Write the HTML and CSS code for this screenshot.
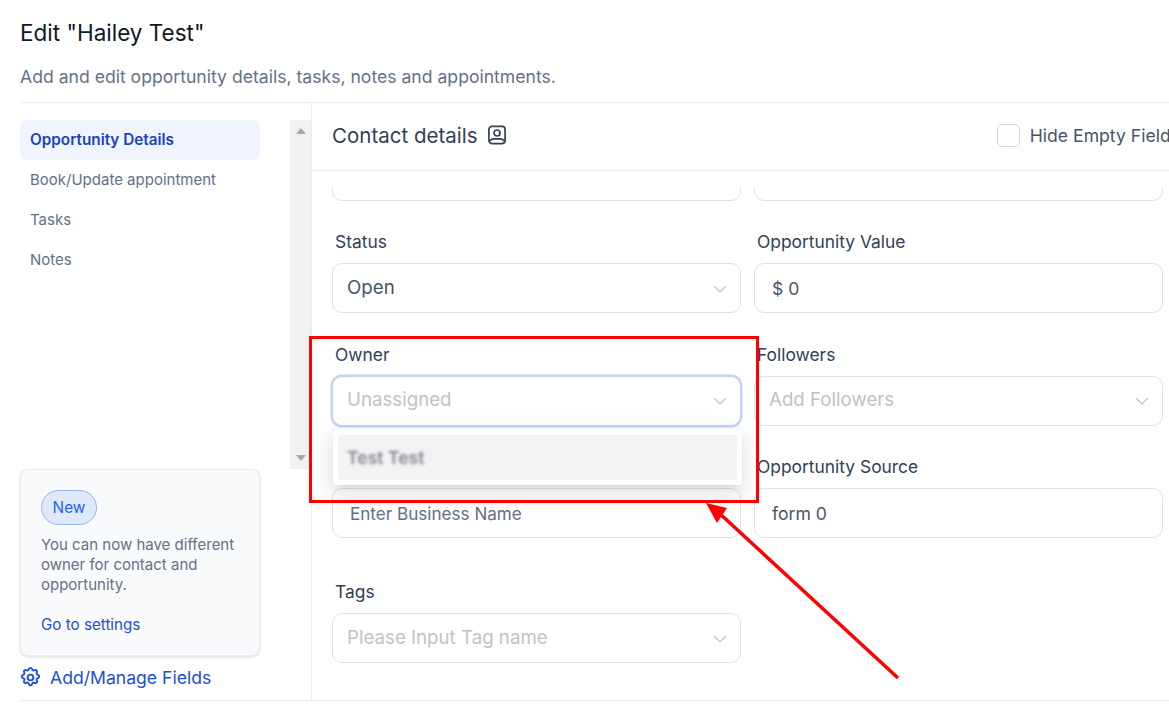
FILE: index.html
```html
<!DOCTYPE html>
<html lang="en">
<head>
    <meta charset="UTF-8">
    <meta name="viewport" content="width=device-width, initial-scale=1.0">
    <title>Edit Opportunity</title>
    <link rel="stylesheet" href="styles.css">
</head>
<body>
    <div class="page">
        <header class="page-head">
            <h1>Edit "Hailey Test"</h1>
            <p>Add and edit opportunity details, tasks, notes and appointments.</p>
        </header>

        <div class="page-body">
            <aside class="sidebar">
                <nav class="side-nav">
                    <a class="side-link active">Opportunity Details</a>
                    <a class="side-link">Book/Update appointment</a>
                    <a class="side-link">Tasks</a>
                    <a class="side-link">Notes</a>
                </nav>

                <div class="notice">
                    <span class="badge">New</span>
                    <p>You can now have different owner for contact and opportunity.</p>
                    <a class="notice-link">Go to settings</a>
                </div>

                <a class="manage-link">
                    <svg viewBox="0 0 24 24" width="23" height="23" fill="none" stroke="currentColor" stroke-width="2" stroke-linejoin="round">
                        <path d="M10.3 3.3c.4-1.8 3-1.8 3.4 0a1.7 1.7 0 0 0 2.6 1.1c1.5-.9 3.3.8 2.3 2.3a1.7 1.7 0 0 0 1.1 2.6c1.8.4 1.8 3 0 3.4a1.7 1.7 0 0 0-1.1 2.6c1 1.5-.8 3.3-2.3 2.3a1.7 1.7 0 0 0-2.6 1.1c-.4 1.8-3 1.8-3.4 0a1.7 1.7 0 0 0-2.6-1.1c-1.5 1-3.3-.8-2.3-2.3a1.7 1.7 0 0 0-1.1-2.6c-1.8-.4-1.8-3 0-3.4a1.7 1.7 0 0 0 1.1-2.6c-1-1.5.8-3.2 2.3-2.3a1.7 1.7 0 0 0 2.6-1.1z"/>
                        <circle cx="12" cy="12" r="3"/>
                    </svg>
                    Add/Manage Fields
                </a>
            </aside>

            <div class="scrollbar">
                <span class="arrow-up"></span>
                <span class="arrow-down"></span>
            </div>

            <main class="content">
                <div class="content-head">
                    <h2>Contact details</h2>
                    <svg class="contact-icon" viewBox="0 0 20 20" width="20" height="20" fill="none" stroke="currentColor" stroke-width="1.7">
                        <rect x="1.9" y="1.4" width="16.2" height="17.2" rx="3"/>
                        <circle cx="10" cy="8" r="3"/>
                        <path d="M2.5 16c1.500-1.600 3-2.200 4.500-2.200h6c1.500 0 3 .6 4.500 2.200"/>
                    </svg>
                    <label class="hide-empty">
                        <span class="checkbox"></span>
                        Hide Empty Fields
                    </label>
                </div>

                <div class="form-scroll">
                    <div class="form-grid">
                        <div class="field">
                            <div class="label">&nbsp;</div>
                            <div class="control"></div>
                        </div>
                        <div class="field">
                            <div class="label">&nbsp;</div>
                            <div class="control"></div>
                        </div>

                        <div class="field">
                            <div class="label">Status</div>
                            <div class="control select">
                                <span>Open</span>
                                <svg class="chevron" viewBox="0 0 14 8"><path d="M1 1l6 6 6-6"/></svg>
                            </div>
                        </div>
                        <div class="field">
                            <div class="label">Opportunity Value</div>
                            <div class="control value">$ 0</div>
                        </div>

                        <div class="field">
                            <div class="label">Owner</div>
                            <div class="control select focused">
                                <span class="placeholder">Unassigned</span>
                                <svg class="chevron" viewBox="0 0 14 8"><path d="M1 1l6 6 6-6"/></svg>
                            </div>
                            <div class="dropdown">
                                <div class="dropdown-item"><span class="blurred">Test Test</span></div>
                            </div>
                        </div>
                        <div class="field">
                            <div class="label">Followers</div>
                            <div class="control select">
                                <span class="placeholder">Add Followers</span>
                                <svg class="chevron" viewBox="0 0 14 8"><path d="M1 1l6 6 6-6"/></svg>
                            </div>
                        </div>

                        <div class="field">
                            <div class="label">&nbsp;</div>
                            <div class="control business">Enter Business Name</div>
                        </div>
                        <div class="field">
                            <div class="label">Opportunity Source</div>
                            <div class="control value">form 0</div>
                        </div>

                        <div class="field tags">
                            <div class="label">Tags</div>
                            <div class="control select">
                                <span class="placeholder">Please Input Tag name</span>
                                <svg class="chevron" viewBox="0 0 14 8"><path d="M1 1l6 6 6-6"/></svg>
                            </div>
                        </div>
                    </div>
                </div>
            </main>
        </div>

        <!-- annotation drawn over the screenshot -->
        <div class="callout-box"></div>
        <svg class="callout-arrow" viewBox="0 0 1169 709" width="1169" height="709">
            <path class="arrow-line" d="M898 678L718 512"/>
            <path class="arrow-head" d="M706 503L727 508L717 523z"/>
        </svg>
    </div>
</body>
</html>
```

FILE: styles.css
```css
* {
    box-sizing: border-box;
}

html, body {
    margin: 0;
    height: 100%;
    overflow: hidden;
    background: white;
}

body {
    font-family: Inter, 'Noto Sans', sans-serif;
    color: #344054;
}

.page {
    position: relative;
    width: 1169px;
    height: 709px;
    padding-left: 20px;
    overflow: hidden;
}

.page-head {
    height: 103px;
    padding-top: 19px;
    border-bottom: 1px solid #eaecf0;
}

.page-head h1 {
    margin: 0;
    font-size: 22.5px;
    line-height: 28px;
    font-weight: 400;
    color: #101828;
}

.page-head p {
    margin: 18px 0 0;
    font-size: 17.6px;
    line-height: 24px;
    color: #667085;
}

.page-body {
    display: flex;
    height: 598px;
    border-bottom: 1px solid #eaecf0;
}

/* left column */
.sidebar {
    flex: none;
    width: 240px;
    padding-top: 17px;
    display: flex;
    flex-direction: column;
}

.side-link {
    display: block;
    height: 40px;
    padding: 0 10px;
    font-size: 15px;
    line-height: 40px;
    color: #667085;
    border-radius: 6px;
    white-space: nowrap;
}

.side-link.active {
    background: #eff4ff;
    color: #1d43b8;
    font-size: 15.3px;
    font-weight: 600;
}

.notice {
    margin-top: auto;
    height: 187px;
    padding: 20px 12px 20px 20px;
    background: #f9fafb;
    border: 1px solid #eaecf0;
    border-radius: 8px;
    box-shadow: 0 1px 3px rgba(0, 0, 0, 0.15);
}

.badge {
    display: block;
    width: 56px;
    height: 35px;
    font-size: 15.4px;
    line-height: 33px;
    text-align: center;
    color: #2563eb;
    background: #dfe9fb;
    border: 1px solid #93b5f9;
    border-radius: 18px;
}

.notice p {
    margin: 10px 0 0;
    font-size: 15px;
    line-height: 20px;
    color: #667085;
}

.notice-link {
    display: block;
    margin-top: 20px;
    font-size: 15.2px;
    line-height: 20px;
    color: #1d4ed8;
}

.manage-link {
    display: flex;
    align-items: center;
    gap: 8px;
    height: 44px;
    margin-left: -1px;
    padding-bottom: 1px;
    font-size: 17.6px;
    color: #1d4ed8;
}

/* fake browser scrollbar between sidebar and form */
.scrollbar {
    flex: none;
    width: 21px;
    height: 349px;
    margin: 17px 0 0 30px;
    padding: 8px 0;
    background: #f1f1f1;
    display: flex;
    flex-direction: column;
    justify-content: space-between;
    align-items: center;
}

.arrow-up {
    border: 5px solid transparent;
    border-top: 0;
    border-bottom: 6px solid #a8a8a8;
}

.arrow-down {
    border: 5px solid transparent;
    border-bottom: 0;
    border-top: 6px solid #a8a8a8;
}

/* form */
.content {
    flex: none;
    width: 869px;
    border-left: 1px solid #eaecf0;
    display: flex;
    flex-direction: column;
}

.content-head {
    flex: none;
    height: 68px;
    padding: 0 0 3px 20px;
    display: flex;
    align-items: center;
    white-space: nowrap;
    border-bottom: 1px solid #eaecf0;
}

.content-head h2 {
    margin: 0;
    font-size: 20.5px;
    font-weight: 400;
    color: #344054;
}

.contact-icon {
    margin-left: 10px;
    color: #344054;
}

.hide-empty {
    display: flex;
    align-items: center;
    gap: 10px;
    margin-left: auto;
    font-size: 17.6px;
    color: #475467;
}

.checkbox {
    width: 23px;
    height: 23px;
    border: 1px solid #d0d5dd;
    border-radius: 5px;
}

/* the top of this area is blank so the first row peeks out from under the header */
.form-scroll {
    flex: 1;
    margin-top: 17px;
    overflow: hidden;
}

.form-grid {
    display: grid;
    grid-template-columns: 409px 409px;
    column-gap: 13px;
    row-gap: 31.5px;
    margin: -68.5px 0 0 20px;
}

.field {
    position: relative;
}

.field.tags {
    margin-top: 12.5px;
}

.label {
    height: 22px;
    margin: 0 0 9px 3px;
    padding-top: 1px;
    font-size: 17.4px;
    line-height: 17px;
    color: #344054;
}

.control {
    height: 50px;
    padding: 0 14px;
    display: flex;
    align-items: center;
    justify-content: space-between;
    font-size: 18.7px;
    color: #475467;
    background: white;
    border: 1px solid #e0e2e7;
    border-radius: 10px;
}

.control.select {
    padding-bottom: 2px;
}

.control.value {
    padding-left: 17px;
    font-size: 17.6px;
}

.control.business {
    padding-left: 17px;
    font-size: 17.1px;
    color: #667085;
}

.control.focused {
    border-color: #c3d4f3;
    box-shadow: 0 0 0 1.5px #c3d4f3;
}

.placeholder {
    color: #c2c2c2;
}

.chevron {
    width: 14px;
    height: 8px;
    margin: 3px -1px 0 0;
    fill: none;
    stroke: #c2c2c2;
    stroke-width: 1.2;
}

.dropdown {
    position: absolute;
    z-index: 5;
    top: 85.5px;
    left: 1px;
    width: 409px;
    padding: 5px;
    background: white;
    border-radius: 4px;
    box-shadow: 0 3px 6px -4px rgba(0, 0, 0, 0.12), 0 6px 16px rgba(0, 0, 0, 0.08), 0 9px 28px 8px rgba(0, 0, 0, 0.05);
}

.dropdown-item {
    height: 45px;
    padding-left: 9px;
    line-height: 45px;
    font-size: 17.6px;
    background: #f3f3f5;
    border-radius: 3px;
}

.blurred {
    font-weight: 600;
    color: #85858c;
    filter: blur(1.4px);
    display: inline-block;
}

/* red annotation */
.callout-box {
    position: absolute;
    z-index: 10;
    left: 309px;
    top: 336px;
    width: 450px;
    height: 167px;
    border: 3px solid #ff0000;
}

.callout-arrow {
    position: absolute;
    z-index: 10;
    left: 0;
    top: 0;
    pointer-events: none;
}

.arrow-line {
    stroke: #ff0000;
    stroke-width: 3.5;
    fill: none;
}

.arrow-head {
    fill: #ff0000;
}
```
